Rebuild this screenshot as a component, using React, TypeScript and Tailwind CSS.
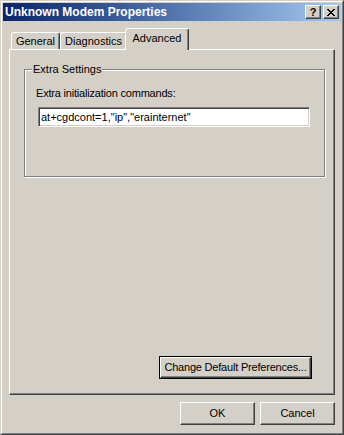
import React from 'react';

const raised = "border border-t-white border-l-white border-r-[#404040] border-b-[#404040] shadow-[inset_-1px_-1px_0_#808080]";

function CloseGlyph() {
    const rows: [number, number][][] = [
        [[0, 2], [6, 2]],
        [[1, 2], [5, 2]],
        [[2, 4]],
        [[3, 2]],
        [[2, 4]],
        [[1, 2], [5, 2]],
        [[0, 2], [6, 2]],
    ];
    return (
        <svg width="8" height="7" viewBox="0 0 8 7" shapeRendering="crispEdges">
            {rows.map((segs, y) =>
                segs.map(([x, w], i) => <rect key={`${y}-${i}`} x={x} y={y} width={w} height={1} fill="#000" />)
            )}
        </svg>
    );
}

function TitleButton({ children }: { children: React.ReactNode }) {
    return (
        <div className={`w-[16px] h-[14px] bg-[#d4d0c8] flex items-center justify-center ${raised}`}>
            {children}
        </div>
    );
}

function Tab({ label, active, className }: { label: string; active?: boolean; className: string }) {
    return (
        <div
            className={`${className} bg-[#d4d0c8] rounded-t-[3px] border-t border-l border-t-white border-l-white border-r border-r-[#404040] shadow-[inset_-1px_0_0_#808080] flex justify-center leading-[13px] ${active ? 'relative z-10 h-[22px] -mb-px pt-[3px]' : 'h-[17px] pt-[2px]'}`}
        >
            {label}
        </div>
    );
}

function Button({ label, className, isDefault }: { label: string; className: string; isDefault?: boolean }) {
    if (isDefault) {
        return (
            <div className={`${className} border border-black`}>
                <div className={`h-full w-full flex items-center justify-center tracking-[-0.2px] ${raised}`}>{label}</div>
            </div>
        );
    }
    return <div className={`${className} flex items-center justify-center ${raised}`}>{label}</div>;
}

export default function App() {
    return (
        <div className="w-[344px] h-[435px] bg-[#d4d0c8] border border-t-[#d4d0c8] border-l-[#d4d0c8] border-r-[#404040] border-b-[#404040] font-['Liberation_Sans',Arial,sans-serif] text-[11px] text-black">
            <div className="h-full border border-t-white border-l-white border-r-[#808080] border-b-[#808080] p-px flex flex-col">
                {/* Title bar */}
                <div className="h-[18px] bg-gradient-to-r from-[#0a246a] to-[#a6caf0] flex items-center pl-[2px] pr-[2px]">
                    <span className="flex-1 font-bold text-white text-[12px] leading-[14px]">Unknown Modem Properties</span>
                    <div className="flex gap-[2px]">
                        <TitleButton>
                            <span className="font-bold leading-[11px] text-[11px]">?</span>
                        </TitleButton>
                        <TitleButton>
                            <CloseGlyph />
                        </TitleButton>
                    </div>
                </div>

                <div className="flex-1 flex flex-col px-[6px] pt-[7px]">
                    {/* Tabs */}
                    <div className="h-[21px] flex items-end pl-[2px]">
                        <Tab label="General" className="w-[49px]" />
                        <Tab label="Diagnostics" className="w-[67px]" />
                        <Tab label="Advanced" active className="w-[64px] -ml-[2px]" />
                    </div>

                    {/* Tab panel */}
                    <div className="h-[346px] flex flex-col border border-t-white border-l-white border-r-[#404040] border-b-[#404040] shadow-[inset_-1px_-1px_0_#808080]">
                        <div className="relative mt-[19px] ml-[14px] mr-[9px] h-[108px] border border-[#808080] shadow-[inset_1px_1px_0_white,1px_1px_0_white] pt-[17px] pl-[11px]">
                            <span className="absolute -top-[7px] left-[7px] px-[1px] bg-[#d4d0c8] leading-[13px]">Extra Settings</span>
                            <div className="leading-[13px] tracking-[-0.2px]">Extra initialization commands:</div>
                            <input
                                readOnly
                                defaultValue={'at+cgdcont=1,"ip","erainternet"'}
                                className="mt-[7px] ml-[2px] w-[272px] h-[20px] bg-white px-[2px] outline-none border border-t-[#808080] border-l-[#808080] border-b-white border-r-white shadow-[inset_1px_1px_0_#404040,inset_-1px_-1px_0_#d4d0c8]"
                            />
                        </div>
                        <div className="flex-1" />
                        <div className="flex justify-end mr-[22px] mb-[15px]">
                            <Button label="Change Default Preferences..." className="w-[153px] h-[23px]" isDefault />
                        </div>
                    </div>

                    {/* Dialog buttons */}
                    <div className="flex justify-end gap-[5px] mt-[7px]">
                        <Button label="OK" className="w-[75px] h-[23px]" />
                        <Button label="Cancel" className="w-[75px] h-[23px]" />
                    </div>
                </div>
            </div>
        </div>
    );
}
